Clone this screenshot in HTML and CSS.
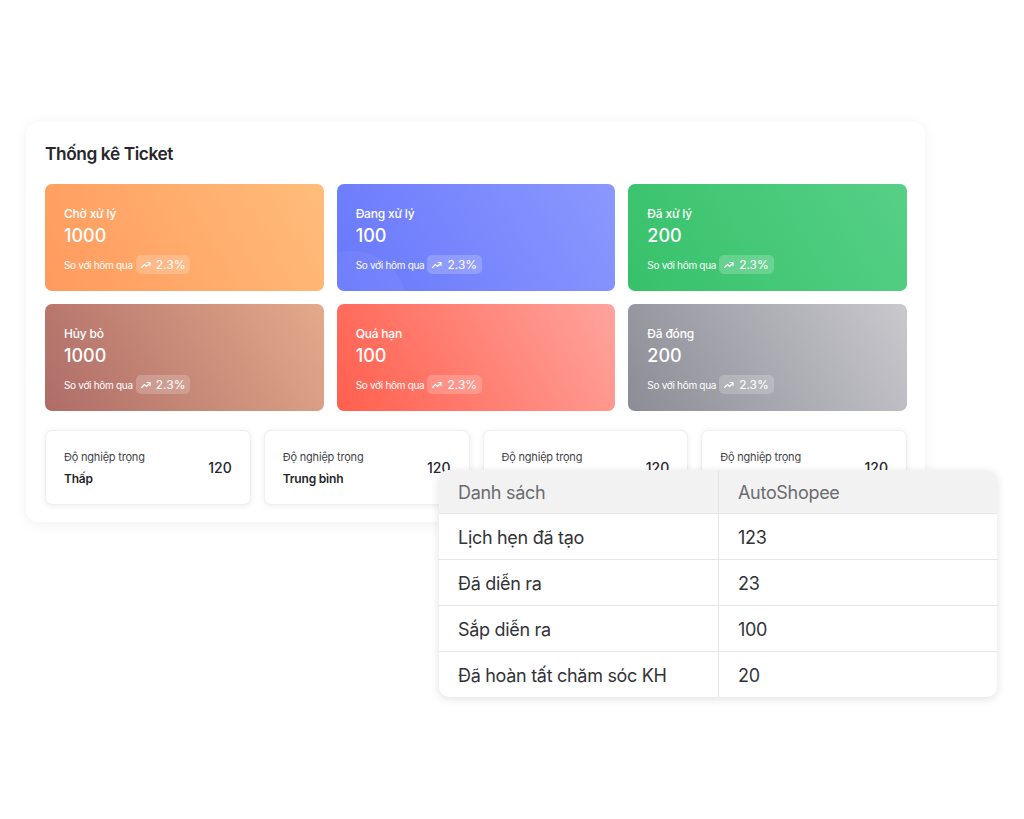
FILE: index.html
```html
<!DOCTYPE html>
<html lang="vi">
<head>
    <meta charset="UTF-8">
    <meta name="viewport" content="width=device-width, initial-scale=1.0">
    <title>Thống kê Ticket</title>
    <link rel="stylesheet" href="styles.css">
</head>
<body>

<div class="stage">
    <div class="ticket-card">
        <h1>Thống kê Ticket</h1>

        <div class="stat-grid">
            <div class="stat orange">
                <div class="stat-label">Chờ xử lý</div>
                <div class="stat-value">1000</div>
                <div class="stat-compare">
                    <span>So với hôm qua</span>
                    <span class="trend">
                        <svg viewBox="0 0 24 24"><polyline points="3 17 9 11 13 15 20 8"/><polyline points="14 7 20 7 20 13"/></svg>
                        2.3%
                    </span>
                </div>
            </div>
            <div class="stat blue">
                <div class="stat-label">Đang xử lý</div>
                <div class="stat-value">100</div>
                <div class="stat-compare">
                    <span>So với hôm qua</span>
                    <span class="trend">
                        <svg viewBox="0 0 24 24"><polyline points="3 17 9 11 13 15 20 8"/><polyline points="14 7 20 7 20 13"/></svg>
                        2.3%
                    </span>
                </div>
            </div>
            <div class="stat green">
                <div class="stat-label">Đã xử lý</div>
                <div class="stat-value">200</div>
                <div class="stat-compare">
                    <span>So với hôm qua</span>
                    <span class="trend">
                        <svg viewBox="0 0 24 24"><polyline points="3 17 9 11 13 15 20 8"/><polyline points="14 7 20 7 20 13"/></svg>
                        2.3%
                    </span>
                </div>
            </div>
            <div class="stat brown">
                <div class="stat-label">Hủy bỏ</div>
                <div class="stat-value">1000</div>
                <div class="stat-compare">
                    <span>So với hôm qua</span>
                    <span class="trend">
                        <svg viewBox="0 0 24 24"><polyline points="3 17 9 11 13 15 20 8"/><polyline points="14 7 20 7 20 13"/></svg>
                        2.3%
                    </span>
                </div>
            </div>
            <div class="stat red">
                <div class="stat-label">Quá hạn</div>
                <div class="stat-value">100</div>
                <div class="stat-compare">
                    <span>So với hôm qua</span>
                    <span class="trend">
                        <svg viewBox="0 0 24 24"><polyline points="3 17 9 11 13 15 20 8"/><polyline points="14 7 20 7 20 13"/></svg>
                        2.3%
                    </span>
                </div>
            </div>
            <div class="stat gray">
                <div class="stat-label">Đã đóng</div>
                <div class="stat-value">200</div>
                <div class="stat-compare">
                    <span>So với hôm qua</span>
                    <span class="trend">
                        <svg viewBox="0 0 24 24"><polyline points="3 17 9 11 13 15 20 8"/><polyline points="14 7 20 7 20 13"/></svg>
                        2.3%
                    </span>
                </div>
            </div>
        </div>

        <div class="severity-row">
            <div class="severity">
                <div>
                    <div class="severity-label">Độ nghiệp trọng</div>
                    <div class="severity-level">Thấp</div>
                </div>
                <div class="severity-count">120</div>
            </div>
            <div class="severity">
                <div>
                    <div class="severity-label">Độ nghiệp trọng</div>
                    <div class="severity-level">Trung bình</div>
                </div>
                <div class="severity-count">120</div>
            </div>
            <div class="severity">
                <div>
                    <div class="severity-label">Độ nghiệp trọng</div>
                    <div class="severity-level"></div>
                </div>
                <div class="severity-count">120</div>
            </div>
            <div class="severity">
                <div>
                    <div class="severity-label">Độ nghiệp trọng</div>
                    <div class="severity-level"></div>
                </div>
                <div class="severity-count">120</div>
            </div>
        </div>
    </div>

    <table class="list-table">
        <thead>
            <tr><th>Danh sách</th><th>AutoShopee</th></tr>
        </thead>
        <tbody>
            <tr><td>Lịch hẹn đã tạo</td><td>123</td></tr>
            <tr><td>Đã diễn ra</td><td>23</td></tr>
            <tr><td>Sắp diễn ra</td><td>100</td></tr>
            <tr><td>Đã hoàn tất chăm sóc KH</td><td>20</td></tr>
        </tbody>
    </table>
</div>

</body>
</html>
```

FILE: styles.css
```css
* {
    box-sizing: border-box;
}

body {
    margin: 0;
    background: #fff;
    font-family: 'Inter', 'Noto Sans', sans-serif;
    color: #2b2b2f;
}

.stage {
    position: relative;
    width: 1024px;
    height: 819px;
    padding: 122px 0 0 26px;
}

.ticket-card {
    width: 899px;
    background: #fff;
    border-radius: 12px;
    padding: 21px 18px 17px 19px;
    box-shadow: 0 2px 14px rgba(0, 0, 0, 0.06);
}

.ticket-card h1 {
    margin: 0 0 19px;
    font-size: 17.3px;
    font-weight: 600;
    letter-spacing: -0.4px;
    line-height: 22px;
    color: #26262b;
}

.stat-grid {
    display: grid;
    grid-template-columns: repeat(3, 1fr);
    gap: 13px;
}

.stat {
    position: relative;
    overflow: hidden;
    height: 107px;
    border-radius: 7px;
    padding: 22px 19px 0;
    color: #fff;
}

.stat.orange { background: linear-gradient(60deg, #ff9a5d, #ffbd7b); }
.stat.blue   { background: linear-gradient(60deg, #6878fc, #8b98fe); }
.stat.green  { background: linear-gradient(60deg, #37c16a, #56d087); }
.stat.brown  { background: linear-gradient(60deg, #ae6c67, #e3aa8b); }
.stat.red    { background: linear-gradient(60deg, #ff5f4d, #ffa49d); }
.stat.gray   { background: linear-gradient(60deg, #8c8c96, #c8c8cd); }

/* faint arc in the corner of the blue tile */
.stat.blue::before {
    content: '';
    position: absolute;
    left: -40px;
    bottom: -70px;
    width: 110px;
    height: 110px;
    border-radius: 50%;
    background: rgba(255, 255, 255, 0.05);
}

.stat-label {
    font-size: 12px;
    line-height: 16px;
    font-weight: 500;
    letter-spacing: -0.2px;
}

.stat-value {
    margin-top: 3px;
    font-size: 18px;
    line-height: 22px;
    font-weight: 500;
}

.stat-compare {
    display: flex;
    align-items: center;
    gap: 3px;
    margin-top: 8px;
    font-size: 10px;
    letter-spacing: -0.3px;
}

.trend {
    display: inline-flex;
    align-items: center;
    gap: 4px;
    height: 19px;
    padding: 0 5px 0 4px;
    border-radius: 5px;
    background: rgba(255, 255, 255, 0.2);
    font-size: 12px;
    letter-spacing: 0;
}

.trend svg {
    width: 12px;
    height: 12px;
    fill: none;
    stroke: #fff;
    stroke-width: 2.2;
    stroke-linecap: round;
    stroke-linejoin: round;
}

.severity-row {
    display: grid;
    grid-template-columns: repeat(4, 1fr);
    gap: 13px;
    margin-top: 19px;
}

.severity {
    display: flex;
    align-items: center;
    justify-content: space-between;
    height: 75px;
    padding: 0 18px 0 18px;
    border-radius: 7px;
    background: #fff;
    box-shadow: 0 1px 6px rgba(0, 0, 0, 0.08);
    border: 1px solid #f0f0f2;
}

.severity-label {
    font-size: 11px;
    line-height: 14px;
    color: #44444a;
    letter-spacing: -0.2px;
}

.severity-level {
    margin-top: 7px;
    min-height: 15px;
    font-size: 12px;
    line-height: 15px;
    font-weight: 600;
    color: #26262b;
    letter-spacing: -0.2px;
}

.severity-count {
    font-size: 14px;
    font-weight: 500;
    color: #26262b;
}

.list-table {
    position: absolute;
    left: 439px;
    top: 470px;
    width: 558px;
    border-collapse: separate;
    border-spacing: 0;
    background: #fff;
    border-radius: 10px;
    overflow: hidden;
    box-shadow: 0 2px 10px rgba(0, 0, 0, 0.12);
    font-size: 18px;
    color: #333338;
}

.list-table th,
.list-table td {
    width: 50%;
    text-align: left;
    padding: 2px 19px 0;
    font-weight: 400;
    letter-spacing: -0.3px;
    border-bottom: 1px solid #e6e6ea;
}

.list-table th + th,
.list-table td + td {
    border-left: 1px solid #e6e6ea;
}

.list-table th {
    height: 44px;
    background: #f2f2f3;
    color: #6b6b70;
}

.list-table td {
    height: 46px;
}

.list-table tbody tr:last-child td {
    height: 45px;
    border-bottom: none;
}
```
